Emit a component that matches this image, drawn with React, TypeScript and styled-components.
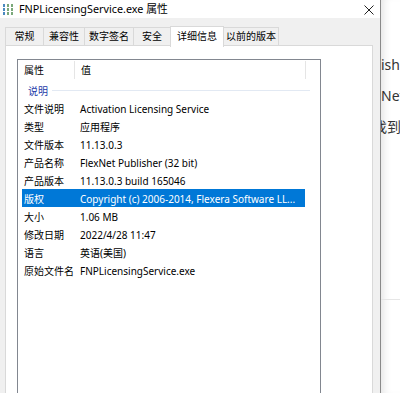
import React from "react";
import styled, { createGlobalStyle } from "styled-components";

const Global = createGlobalStyle`
  html, body { margin: 0; padding: 0; background: #fff; }
  body { width: 400px; height: 393px; overflow: hidden; font-family: "Noto Sans", "Noto Sans CJK SC", sans-serif; font-size: 10px; color: #000; }
`;

const Screen = styled.div`
  display: flex;
  width: 400px;
  height: 393px;
  overflow: hidden;
`;

const Dialog = styled.div`
  width: 380px;
  flex: none;
  display: flex;
  flex-direction: column;
  border-right: 1px solid #8a8a8a;
  background: #f0f0f0;
`;

const TitleBar = styled.div`
  height: 19px;
  background: #fff;
  display: flex;
  align-items: center;
  padding-left: 3px;
  gap: 5px;
  position: relative;
`;

const TitleText = styled.span`
  font-size: 10.8px;
  line-height: 19px;
  margin-top: -1px;
`;

const Close = styled.div`
  position: absolute;
  right: 6px;
  top: 4px;
  width: 10px;
  height: 10px;
`;

const Body = styled.div`
  flex: 1;
  padding: 8px 7px 0 5px;
  display: flex;
  flex-direction: column;
`;

const Tabs = styled.div`
  display: flex;
  align-items: flex-end;
  height: 20px;
  position: relative;
  z-index: 1;
`;

const Tab = styled.div<{ $active?: boolean; $w: number }>`
  width: ${(p) => p.$w}px;
  box-sizing: border-box;
  height: ${(p) => (p.$active ? 21 : 19)}px;
  border: 1px solid #d9d9d9;
  border-bottom: ${(p) => (p.$active ? "none" : "1px solid #d9d9d9")};
  margin-left: -1px;
  background: ${(p) => (p.$active ? "#fff" : "#f0f0f0")};
  display: flex;
  align-items: center;
  justify-content: center;
  font-size: 10px;
  line-height: 1;
  white-space: nowrap;
  padding-bottom: ${(p) => (p.$active ? 3 : 1)}px;
  margin-bottom: ${(p) => (p.$active ? -1 : 0)}px;
  &:first-child { margin-left: 0; }
`;

const Page = styled.div`
  flex: 1;
  background: #fff;
  border: 1px solid #d9d9d9;
  border-bottom: none;
  margin-top: -1px;
  padding: 13px 0 0 11px;
`;

const List = styled.div`
  width: 304px;
  height: 400px;
  box-sizing: border-box;
  border: 1px solid #828790;
  border-bottom: none;
  background: #fff;
`;

const Header = styled.div`
  height: 20px;
  display: flex;
  align-items: center;
`;

const HeaderCell = styled.div<{ $w: number }>`
  width: ${(p) => p.$w}px;
  box-sizing: border-box;
  padding-left: 6px;
  height: 18px;
  line-height: 19px;
  border-right: 1px solid #e5e5e5;
`;

const Group = styled.div`
  height: 19px;
  display: flex;
  align-items: center;
  padding-left: 10px;
  padding-top: 1px;
  box-sizing: border-box;
  gap: 4px;
  color: #1e3aa8;
`;

const GroupLine = styled.div`
  flex: none;
  width: 258px;
  height: 1px;
  background: #e2e9f3;
`;

const Row = styled.div<{ $sel?: boolean }>`
  height: 18px;
  margin-left: 4px;
  width: 283px;
  display: grid;
  grid-template-columns: 56px 1fr;
  align-items: center;
  background: ${(p) => (p.$sel ? "#0078d7" : "transparent")};
  color: ${(p) => (p.$sel ? "#fff" : "#000")};
`;

const Cell = styled.div`
  padding-left: 2px;
  white-space: nowrap;
  overflow: hidden;
  line-height: 18px;
  padding-top: 1px;
`;

const BgWindow = styled.div`
  flex: 1;
  background: #fff;
  position: relative;
  padding-top: 55px;
  display: flex;
  flex-direction: column;
  gap: 11px;
  overflow: hidden;
  box-shadow: inset 8px 0 8px -6px rgba(0,0,0,0.12);
`;

const BgText = styled.div<{ $shift?: number }>`
  font-size: 14px;
  line-height: 20px;
  color: #333;
  white-space: nowrap;
  margin-left: ${(p) => p.$shift ?? 0}px;
`;

const BgLine = styled.div`
  position: absolute;
  top: 299px;
  left: 0;
  right: 0;
  height: 1px;
  background: #e6e6e6;
`;

const rows: [string, string][] = [
  ["文件说明", "Activation Licensing Service"],
  ["类型", "应用程序"],
  ["文件版本", "11.13.0.3"],
  ["产品名称", "FlexNet Publisher (32 bit)"],
  ["产品版本", "11.13.0.3 build 165046"],
  ["版权", "Copyright (c) 2006-2014, Flexera Software LL..."],
  ["大小", "1.06 MB"],
  ["修改日期", "2022/4/28 11:47"],
  ["语言", "英语(美国)"],
  ["原始文件名", "FNPLicensingService.exe"],
];

const tabs: [string, number][] = [
  ["常规", 39],
  ["兼容性", 42],
  ["数字签名", 50],
  ["安全", 38],
  ["详细信息", 54],
  ["以前的版本", 56],
];

const PropIcon = () => (
  <svg width="11" height="11" viewBox="0 0 11 11">
    {[0, 1, 2].map((r) =>
      [0, 1, 2].map((c) => (
        <rect key={`${r}-${c}`} x={c * 4} y={r * 4} width="2" height="3" fill={c === 0 ? "#4a8ac0" : "#7aa87a"} />
      ))
    )}
  </svg>
);

export default function App() {
  return (
    <Screen>
      <Global />
      <Dialog>
        <TitleBar>
          <PropIcon />
          <TitleText>FNPLicensingService.exe 属性</TitleText>
          <Close>
            <svg width="10" height="10" viewBox="0 0 10 10">
              <path d="M0.5 0.5 L9.5 9.5 M9.5 0.5 L0.5 9.5" stroke="#222" strokeWidth="1" />
            </svg>
          </Close>
        </TitleBar>
        <Body>
          <Tabs>
            {tabs.map(([t, w]) => (
              <Tab key={t} $w={w} $active={t === "详细信息"}>
                {t}
              </Tab>
            ))}
          </Tabs>
          <Page>
            <List>
              <Header>
                <HeaderCell $w={57}>属性</HeaderCell>
                <HeaderCell $w={231}>值</HeaderCell>
              </Header>
              <Group>
                <span>说明</span>
                <GroupLine />
              </Group>
              {rows.map(([k, v]) => (
                <Row key={k} $sel={k === "版权"}>
                  <Cell>{k}</Cell>
                  <Cell>{v}</Cell>
                </Row>
              ))}
            </List>
          </Page>
        </Body>
      </Dialog>
      <BgWindow>
        <BgText>ishe</BgText>
        <BgText>Net</BgText>
        <BgText $shift={-8}>找到</BgText>
        <BgLine />
      </BgWindow>
    </Screen>
  );
}
